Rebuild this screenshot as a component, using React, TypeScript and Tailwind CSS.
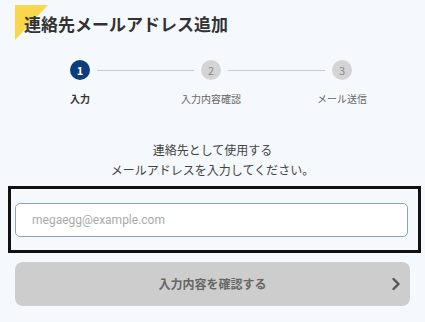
import React from "react";

const Step = ({ n, label, active }: { n: string; label: string; active?: boolean }) => (
  <div className="flex w-5 flex-col items-center">
    <div
      className={
        active
          ? "flex h-5 w-5 items-center justify-center rounded-full bg-[#0f3d7b] text-[11px] font-bold leading-none text-white"
          : "flex h-5 w-5 items-center justify-center rounded-full bg-[#d4d4d4] text-[11px] leading-none text-[#8a8a8a]"
      }
    >
      {n}
    </div>
    <div
      className={
        active
          ? "mt-[11px] whitespace-nowrap text-[10px] font-bold leading-[15px] text-[#333]"
          : "mt-[11px] whitespace-nowrap text-[10px] leading-[15px] text-[#666]"
      }
    >
      {label}
    </div>
  </div>
);

export default function App() {
  return (
    <div className="min-h-[322px] w-[425px] overflow-hidden bg-[#f5f8fc] font-['Noto_Sans_CJK_JP','Noto_Sans',sans-serif]">
      <div className="relative h-[46px]">
        <div className="absolute left-[15px] top-[5px] h-[35px] w-[33px] bg-[#f8d74a] [clip-path:polygon(0_0,100%_0,0_100%)]" />
        <h1 className="relative pl-[24px] pt-[12px] text-[17px] font-bold leading-[24px] text-[#333]">
          連絡先メールアドレス追加
        </h1>
      </div>

      <div className="mt-[14px] flex items-start pl-[70px] pr-[73px]">
        <Step n="1" label="入力" active />
        <div className="mx-[7px] mt-[10px] h-px flex-1 bg-[#c8c8c8]" />
        <Step n="2" label="入力内容確認" />
        <div className="mx-[7px] mt-[10px] h-px flex-1 bg-[#c8c8c8]" />
        <Step n="3" label="メール送信" />
      </div>

      <p className="mt-[34px] text-center text-[12px] leading-[20px] text-[#444]">
        連絡先として使用する
        <br />
        メールアドレスを入力してください。
      </p>

      <div className="ml-[8px] mr-[4px] mt-[6px] border-[3px] border-[#111] pb-[13px] pl-[4px] pr-[10px] pt-[14px]">
        <div className="flex h-[34px] items-center rounded-[5px] border-[1.5px] border-[#8da2c0] bg-white pl-[16px] font-['Roboto',sans-serif] text-[12px] text-[#aaa]">
          megaegg@example.com
        </div>
      </div>

      <div className="relative mx-[15px] mt-[9px] flex h-[44px] items-center justify-center rounded-[8px] bg-[#cdcdcd]">
        <span className="text-[12px] font-bold text-[#666]">入力内容を確認する</span>
        <svg className="absolute right-[9px]" width="10" height="14" viewBox="0 0 10 14" fill="none">
          <path d="M2.5 2 L7.5 7 L2.5 12" stroke="#555" strokeWidth="2.4" strokeLinecap="round" strokeLinejoin="round" />
        </svg>
      </div>
    </div>
  );
}
